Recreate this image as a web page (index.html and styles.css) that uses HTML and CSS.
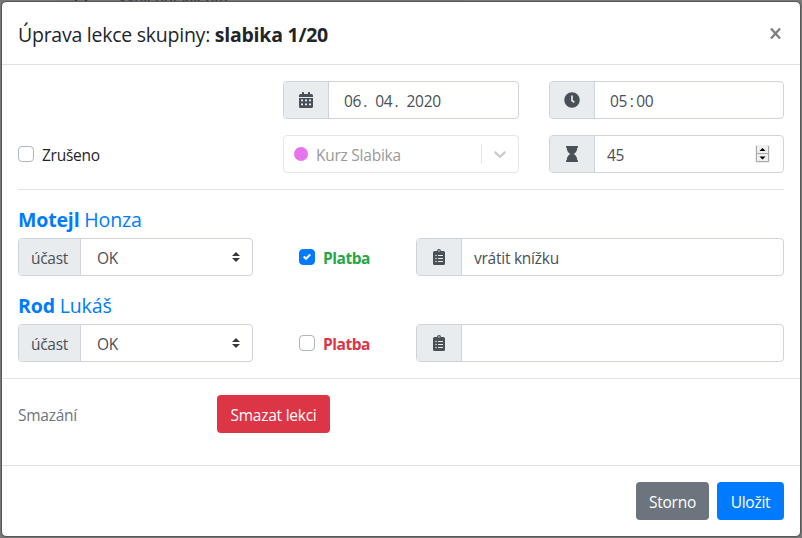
FILE: index.html
```
<!DOCTYPE html>
<html lang="cs">
<head>
<meta charset="utf-8">
<title>Úprava lekce</title>
<link rel="stylesheet" href="styles.css">
</head>
<body>
<svg width="0" height="0" class="defs">
  <symbol id="clipboard" viewBox="0 0 384 512"><path fill="currentColor" fill-rule="evenodd" d="M336 64h-80a64 64 0 0 0-128 0H48a48 48 0 0 0-48 48v352a48 48 0 0 0 48 48h288a48 48 0 0 0 48-48V112a48 48 0 0 0-48-48zM96 424a24 24 0 1 1 0-48 24 24 0 0 1 0 48zm0-96a24 24 0 1 1 0-48 24 24 0 0 1 0 48zm0-96a24 24 0 1 1 0-48 24 24 0 0 1 0 48zm96-192a24 24 0 1 1 0 48 24 24 0 0 1 0-48zm128 368a8 8 0 0 1-8 8H168a8 8 0 0 1-8-8v-16a8 8 0 0 1 8-8h144a8 8 0 0 1 8 8zm0-96a8 8 0 0 1-8 8H168a8 8 0 0 1-8-8v-16a8 8 0 0 1 8-8h144a8 8 0 0 1 8 8zm0-96a8 8 0 0 1-8 8H168a8 8 0 0 1-8-8v-16a8 8 0 0 1 8-8h144a8 8 0 0 1 8 8z"/></symbol>
  <symbol id="sort" viewBox="0 0 4 5"><path fill="#343a40" d="M2 0L0 2h4zm0 5L0 3h4z"/></symbol>
</svg>
<div class="behind"><span class="behind-mark"></span><span class="behind-text">Vyhledat klienta</span></div>
<main class="modal">
  <header class="head">
    <h1 class="title">Úprava lekce skupiny: <b>slabika 1/20</b></h1>
    <svg class="close" width="11" height="11" viewBox="0 0 11 11"><path d="M1 .5l9 10M10 .5l-9 10" stroke="#7f7f7f" stroke-width="2.300"/></svg>
  </header>
  <section class="grid">
    <div class="field date">
      <span class="addon"><svg width="14" height="16" viewBox="0 0 448 512"><path fill="currentColor" fill-rule="evenodd" d="M0 464a48 48 0 0 0 48 48h352a48 48 0 0 0 48-48V192H0zM64 240h64v56H64zm128 0h64v56h-64zm128 0h64v56h-64zM64 368h64v56H64zm128 0h64v56h-64zm128 0h64v56h-64zM400 64h-48V16a16 16 0 0 0-16-16h-32a16 16 0 0 0-16 16v48H160V16a16 16 0 0 0-16-16h-32a16 16 0 0 0-16 16v48H48a48 48 0 0 0-48 48v48h448v-48a48 48 0 0 0-48-48z"/></svg></span>
      <span class="value parts"><span>06</span><span class="dot">.</span><span>04</span><span class="dot">.</span><span>2020</span></span>
    </div>
    <div class="field time">
      <span class="addon"><svg width="16" height="16" viewBox="0 0 16 16"><circle cx="8" cy="8" r="7.75" fill="currentColor"/><path d="M8 3.5v5l2.3 1.9" fill="none" stroke="#e9ecef" stroke-width="1.7"/></svg></span>
      <span class="value parts"><span>05</span><span class="colon">:</span><span>00</span></span>
    </div>
    <label class="check cancel"><span class="box"></span><span class="cancel-text">Zrušeno</span></label>
    <div class="field course">
      <span class="course-dot"></span><span class="course-name">Kurz Slabika</span>
      <span class="split"></span>
      <svg class="chevron" width="20" height="20" viewBox="0 0 20 20"><path fill="#ccc" d="M4.516 7.548c.436-.446 1.043-.481 1.576 0L10 11.295l3.908-3.747c.533-.481 1.141-.446 1.574 0 .436.445.408 1.197 0 1.615-.406.418-4.695 4.502-4.695 4.502a1.095 1.095 0 0 1-1.576 0S4.924 9.581 4.516 9.163s-.436-1.17 0-1.615z"/></svg>
    </div>
    <div class="field length">
      <span class="addon"><svg width="12" height="16" viewBox="0 0 384 512"><path fill="currentColor" d="M360 64a24 24 0 0 0 24-24V24a24 24 0 0 0-24-24H24A24 24 0 0 0 0 24v16a24 24 0 0 0 24 24c0 91 51 167 121 192C75 281 24 357 24 448a24 24 0 0 0-24 24v16a24 24 0 0 0 24 24h336a24 24 0 0 0 24-24v-16a24 24 0 0 0-24-24c0-91-51-167-121-192 70-25 121-101 121-192z"/></svg></span>
      <span class="value">45</span>
      <svg class="spin" width="15" height="18" viewBox="0 0 15 18"><path fill="#f0f0f0" d="M0 0h15v18H0z"/><path fill="none" stroke="#a8a8a8" d="M1.500 1v15.500h12V1M1.500 8.500h12"/><path d="M7.500 3L4.500 6h6zM7.500 14.500L4.500 11.500h6z"/></svg>
    </div>
  </section>
  <section class="people">
    <h2 class="name"><b>Motejl</b> Honza</h2>
    <div class="row">
      <div class="field attend"><span class="addon word">účast</span><span class="value">OK</span><svg class="sort" width="8" height="10"><use href="#sort"/></svg></div>
      <label class="check paid"><span class="box on"><svg width="8" height="8" viewBox="0 0 8 8"><path fill="#fff" d="M6.564.75l-3.590 3.612-1.538-1.550L0 4.260l2.974 2.990L8 2.193z"/></svg></span><b>Platba</b></label>
      <div class="field note"><span class="addon"><svg width="12" height="16"><use href="#clipboard"/></svg></span><span class="value">vrátit knížku</span></div>
    </div>
    <h2 class="name"><b>Rod</b> Lukáš</h2>
    <div class="row">
      <div class="field attend"><span class="addon word">účast</span><span class="value">OK</span><svg class="sort" width="8" height="10"><use href="#sort"/></svg></div>
      <label class="check unpaid"><span class="box"></span><b>Platba</b></label>
      <div class="field note"><span class="addon"><svg width="12" height="16"><use href="#clipboard"/></svg></span><span class="value"></span></div>
    </div>
  </section>
  <section class="remove"><span class="remove-text">Smazání</span><button class="btn danger" type="button">Smazat lekci</button></section>
  <footer class="foot"><button class="btn grey" type="button">Storno</button><button class="btn blue" type="button">Uložit</button></footer>
</main>
</body>
</html>
```
FILE: styles.css
```
* { box-sizing: border-box; }
body { margin: 0; height: 538px; padding: 1px; overflow: hidden; background: #777; font: 15.5px/24px "Open Sans", "Noto Sans", sans-serif; letter-spacing: -.25px; color: #212529; }
.defs { position: absolute; }
.behind { position: absolute; left: 61px; top: 0; width: 400px; height: 2px; overflow: hidden; background: #737373; color: #303234; }
.behind-text { position: absolute; left: 57px; top: -13px; line-height: 20px; font-size: 15px; letter-spacing: -.1px; }
.behind-mark { position: absolute; left: 14px; top: -10px; width: 12px; height: 14px; border: 2px solid #303234; border-radius: 3px; }
.modal { position: relative; width: 800px; height: 536px; background: #fff; background-clip: padding-box; border: 1px solid #57575b; border-radius: 5px; }
.head { height: 63px; border-bottom: 1px solid #dee2e6; padding: 3px 16px 0; display: flex; justify-content: space-between; align-items: center; }
.title { margin: 0; font-size: 19.5px; line-height: 31px; font-weight: 400; letter-spacing: -.25px; }
b { font-weight: 700; }
.close { margin: -3px 3px 0 0; }
.grid { display: grid; grid-template-columns: 235px 236px 235px; column-gap: 30px; row-gap: 16px; margin: 0 16px; padding: 16px 0; border-bottom: 1px solid #e2e3e5; }
.date { grid-column: 2; }
.field { height: 38px; border: 1px solid #ced4da; border-radius: 4px; display: flex; align-items: center; color: #495057; overflow: hidden; }
.addon { width: 45px; align-self: stretch; background: #e9ecef; border-right: 1px solid #ced4da; display: flex; align-items: center; justify-content: center; flex: none; }
.word { width: 62px; padding-top: 1px; }
.value { padding: 1px 0 0 12px; flex: 1; }
.parts { padding-left: 15px; display: flex; }
.dot { width: 14px; padding-left: 2px; }
.colon { width: 9px; text-align: center; }
.course { border-color: #e6e6e6; padding-left: 10px; color: #999; }
.course-dot { width: 14px; height: 14px; border-radius: 50%; background: #e873ef; margin-right: 8px; margin-top: -1px; }
.course-name { padding-top: 1px; flex: 1; }
.split { width: 1px; height: 20px; background: #e6e6e6; }
.chevron { margin: 0 8px; }
.spin { margin-right: 13px; }
.check { display: flex; align-items: center; }
.check b, .cancel-text { padding-top: 1px; }
.check b { letter-spacing: -.45px; }
.box { width: 16px; height: 16px; border: 1px solid #adb5bd; border-radius: 4px; margin-right: 8px; margin-top: -1px; display: flex; align-items: center; justify-content: center; flex: none; }
.on { background: #007bff; border-color: #007bff; }
.people { padding: 16px 16px; margin-left: 1px; padding-left: 15px; border-bottom: 1px solid #e2e3e5; }
.name { margin: 0 0 4px; height: 28px; line-height: 28px; font-size: 19.5px; font-weight: 400; color: #007bff; letter-spacing: -.15px; }
.row { display: flex; margin-bottom: 16px; }
.row:last-child { margin-bottom: 0; }
.attend { width: 235px; }
.attend .value { padding-left: 16px; }
.sort { margin-right: 12px; margin-top: -1px; }
.paid, .unpaid { width: 117px; margin-left: 46px; }
.paid { color: #28a745; }
.unpaid { color: #dc3545; }
.note { width: 368px; }
.remove { height: 87px; padding: 16px; display: flex; border-bottom: 1px solid #dee2e6; }
.remove-text { width: 199px; padding-top: 8px; color: #6c757d; }
.foot { padding: 16px; display: flex; justify-content: flex-end; gap: 8px; }
.btn { height: 38px; border: 0; border-radius: 4px; color: #fff; font: inherit; letter-spacing: inherit; padding: 1px 0 0; white-space: nowrap; }
.danger { width: 113px; background: #dc3545; }
.grey { width: 73px; background: #6c757d; }
.blue { width: 67px; background: #007bff; }
```
